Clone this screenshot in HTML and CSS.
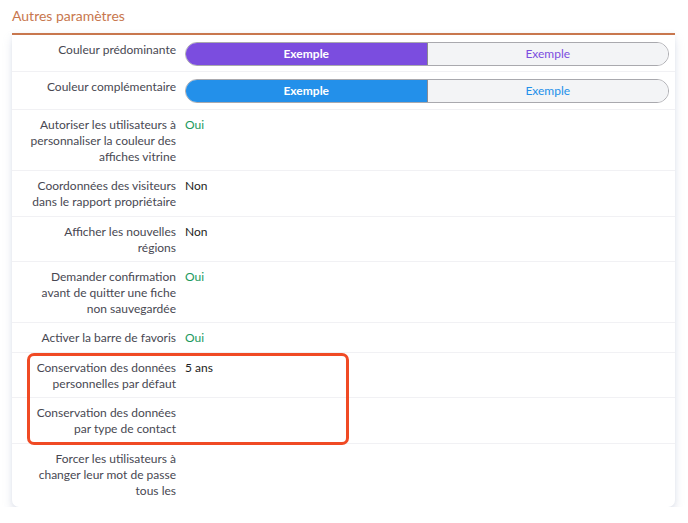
FILE: index.html
```html
<!DOCTYPE html>
<html lang="fr">
<head>
<meta charset="utf-8">
<link rel="stylesheet" href="styles.css">
</head>
<body>
<div class="page">
  <h2 class="title">Autres paramètres</h2>
  <div class="card">
    <div class="row">
      <div class="label">Couleur prédominante</div>
      <div class="value">
        <div class="toggle purple"><span class="on">Exemple</span><span class="off">Exemple</span></div>
      </div>
    </div>
    <div class="row">
      <div class="label">Couleur complémentaire</div>
      <div class="value">
        <div class="toggle blue"><span class="on">Exemple</span><span class="off">Exemple</span></div>
      </div>
    </div>
    <div class="row">
      <div class="label">Autoriser les utilisateurs à personnaliser la couleur des affiches vitrine</div>
      <div class="value yes">Oui</div>
    </div>
    <div class="row">
      <div class="label">Coordonnées des visiteurs dans le rapport propriétaire</div>
      <div class="value">Non</div>
    </div>
    <div class="row">
      <div class="label">Afficher les nouvelles régions</div>
      <div class="value">Non</div>
    </div>
    <div class="row">
      <div class="label">Demander confirmation avant de quitter une fiche non sauvegardée</div>
      <div class="value yes">Oui</div>
    </div>
    <div class="row">
      <div class="label">Activer la barre de favoris</div>
      <div class="value yes">Oui</div>
    </div>
    <div class="highlight">
      <div class="row">
        <div class="label">Conservation des données personnelles par défaut</div>
        <div class="value">5 ans</div>
      </div>
      <div class="row">
        <div class="label">Conservation des données par type de contact</div>
        <div class="value"></div>
      </div>
    </div>
    <div class="row last">
      <div class="label">Forcer les utilisateurs à changer leur mot de passe tous les</div>
      <div class="value"></div>
    </div>
  </div>
</div>
</body>
</html>
```

FILE: styles.css
```css
html, body {
  margin: 0;
  padding: 0;
  background: #ffffff;
}
body {
  font-family: "Lato", "Open Sans", sans-serif;
  color: #222;
}
.page {
  padding: 7px 13px 0 12px;
}
.title {
  margin: 0 0 9px 0;
  font-size: 14px;
  font-weight: 400;
  color: #c8774e;
  line-height: 17px;
}
.card {
  border-top: 2px solid #c8774e;
  background: #fff;
  border-radius: 0 0 7px 7px;
  box-shadow: 0 6px 10px rgba(150, 160, 190, 0.28), 0 0 4px rgba(160, 170, 200, 0.12);
}
.row {
  display: grid;
  grid-template-columns: 164px 1fr;
  column-gap: 9px;
  padding: 7px 6px 5.4px 0;
  border-bottom: 1px solid #f1f1f4;
  font-size: 12px;
  line-height: 16px;
}
.row.first {
  padding-bottom: 6px;
}
.row.last {
  border-bottom: none;
  padding-bottom: 8px;
}
.label {
  text-align: right;
  color: #484852;
  padding-left: 18px;
}
.value {
  color: #1d1d22;
}
.value.yes {
  color: #1a9a5e;
}
.toggle {
  display: flex;
  height: 24px;
  border: 1px solid #a9a9ae;
  border-radius: 12px;
  overflow: hidden;
  box-sizing: border-box;
  font-size: 12px;
}
.toggle span {
  flex: 1;
  display: flex;
  align-items: center;
  justify-content: center;
}
.toggle .on {
  color: #fff;
  font-weight: 700;
  border-right: 1px solid #8a8a92;
}
.toggle .off {
  background: #f3f4f6;
}
.toggle.purple .on { background: #7b4ddf; }
.toggle.purple .off { color: #7b4ddf; }
.toggle.blue .on { background: #2390ea; }
.toggle.blue .off { color: #2390ea; }
.highlight {
  position: relative;
}
.highlight::after {
  content: "";
  position: absolute;
  left: 15px;
  top: 0;
  width: 316px;
  bottom: -1px;
  border: 3px solid #f04a24;
  border-radius: 7px;
  pointer-events: none;
}
```
